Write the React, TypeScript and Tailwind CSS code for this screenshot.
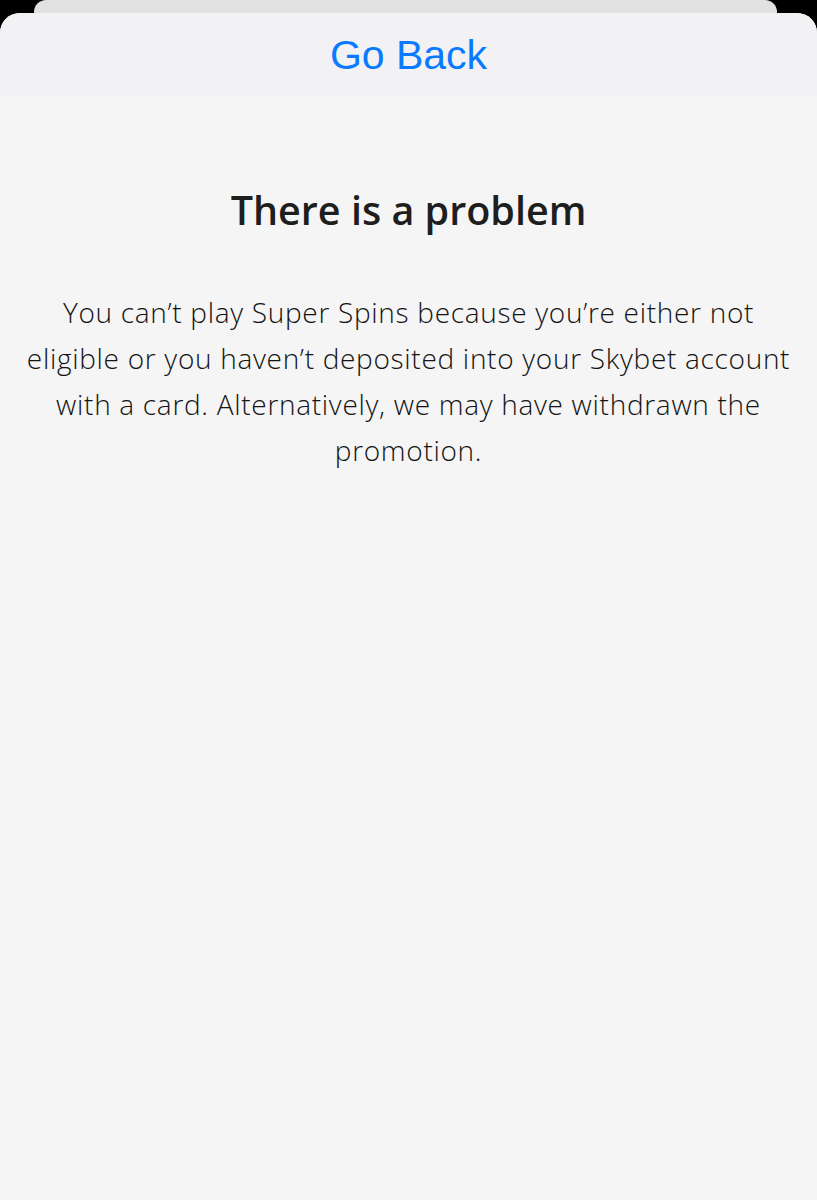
export default function App() {
  return (
    <div className="flex h-[1200px] w-[817px] flex-col overflow-hidden bg-black">
      <div className="ml-[34px] mr-[40px] h-[13px] shrink-0 rounded-t-[12px] bg-[#e1e1e1]" />
      <div className="flex flex-1 flex-col overflow-hidden rounded-t-[20px] bg-[#f5f5f5]">
        <div className="flex h-[84px] shrink-0 items-center justify-center bg-[#f2f2f4]">
          <span className="text-[41px] leading-none text-[#0a7bff]" style={{ fontFamily: '"Liberation Sans", Arial, sans-serif' }}>
            Go Back
          </span>
        </div>
        <div className="flex flex-col items-center px-[20px]" style={{ fontFamily: '"Open Sans", "Noto Sans", sans-serif' }}>
          <h1 className="mt-[90px] text-[39.5px] font-semibold leading-[46px] text-[#1e1e1e]">There is a problem</h1>
          <p className="mt-[56px] text-center text-[28px] font-[350] leading-[46px] tracking-[0.7px] text-[#141414]">
            You can’t play Super Spins because you’re either not eligible or you haven’t deposited into your Skybet account with a card. Alternatively, we may have withdrawn the promotion.
          </p>
        </div>
      </div>
    </div>
  );
}
